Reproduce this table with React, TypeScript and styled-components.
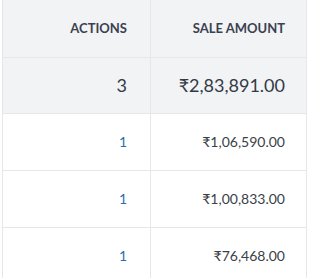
import React from "react";
import styled, { createGlobalStyle } from "styled-components";

const GlobalStyle = createGlobalStyle`
  body {
    margin: 0;
    background: #fff;
    font-family: Lato, "Open Sans", sans-serif;
  }
`;

type Row = { actions: number; amount: string };

const rows: Row[] = [
  { actions: 1, amount: "₹1,06,590.00" },
  { actions: 1, amount: "₹1,00,833.00" },
  { actions: 1, amount: "₹76,468.00" },
];

const App = () => {
  return (
    <>
      <GlobalStyle />
      <Wrap>
        <Table>
          <thead>
            <tr>
              <HeadCell>ACTIONS</HeadCell>
              <HeadCell>SALE AMOUNT</HeadCell>
            </tr>
            <tr>
              <TotalCell>3</TotalCell>
              <TotalCell>₹2,83,891.00</TotalCell>
            </tr>
          </thead>
          <tbody>
            {rows.map((row, i) => (
              <tr key={i}>
                <Cell $link>{row.actions}</Cell>
                <Cell>{row.amount}</Cell>
              </tr>
            ))}
          </tbody>
        </Table>
      </Wrap>
    </>
  );
};

const Wrap = styled.div`
  width: 313px;
  height: 278px;
  overflow: hidden;
  padding-left: 2px;
  box-sizing: border-box;
`;

const Table = styled.table`
  border-collapse: collapse;
  table-layout: fixed;
  width: 305px;

  td,
  th {
    border: 1px solid #e6e7e9;
    text-align: right;
    padding: 0 21px 0 0;
    box-sizing: border-box;
  }

  td:first-child,
  th:first-child {
    width: 148px;
    padding-right: 23px;
  }
`;

const HeadCell = styled.th`
  height: 57px;
  background: #f2f3f5;
  font-size: 13px;
  font-weight: 700;
  color: #3a4150;
  border-top: none !important;
`;

const TotalCell = styled.td`
  height: 56px;
  background: #f2f3f5;
  font-size: 18px;
  color: #333a45;
`;

const Cell = styled.td<{ $link?: boolean }>`
  height: 57px;
  background: #fff;
  font-size: 14px;
  color: ${(p) => (p.$link ? "#2a6fae" : "#3a3f48")};
`;

export default App;
